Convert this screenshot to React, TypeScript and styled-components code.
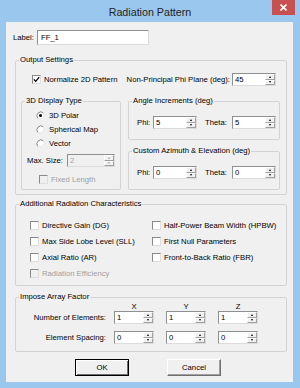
import React from "react";
import styled, { createGlobalStyle } from "styled-components";

const GlobalStyle = createGlobalStyle`
  html, body { margin: 0; padding: 0; }
  body {
    width: 300px;
    height: 388px;
    overflow: hidden;
    font-family: "Liberation Sans", Arial, sans-serif;
    font-size: 7.7px;
    color: #000;
  }
  * { box-sizing: border-box; }
`;

const Window = styled.div`
  width: 300px;
  height: 388px;
  background: #9ac7ee;
  display: flex;
  flex-direction: column;
`;

const TitleBar = styled.div`
  height: 22px;
  flex: none;
  display: grid;
  grid-template-columns: 1fr auto 1fr;
  align-items: start;
`;

const Title = styled.div`
  grid-column: 2;
  padding-top: 6px;
  font-size: 10.7px;
  line-height: 12px;
  color: #1e1e1e;
  white-space: nowrap;
`;

const CloseButton = styled.div`
  grid-column: 3;
  justify-self: end;
  margin-right: 5px;
  width: 23px;
  height: 15px;
  background: #c75050;
  display: flex;
  align-items: center;
  justify-content: center;
`;

const Client = styled.div`
  flex: 1;
  margin: 0 7px 6px 6px;
  background: #f0f0f0;
  display: flex;
  flex-direction: column;
`;

const LabelRow = styled.div`
  display: flex;
  align-items: center;
  gap: 3px;
  height: 15px;
  margin: 8px 0 0 7px;
`;

const TextInput = styled.div`
  width: 112px;
  height: 15px;
  background: #fff;
  border: 1px solid;
  border-color: #8e8f8f #dcdcdc #dcdcdc #8e8f8f;
  padding-left: 3px;
  line-height: 13px;
`;

const Group = styled.fieldset<{ $margin: string }>`
  margin: ${(p) => p.$margin};
  border: 1px solid #d3d3d3;
  border-radius: 2px;
  padding: 0;
  min-width: 0;
`;

const Legend = styled.legend`
  margin-left: 3px;
  padding: 0 1px;
  line-height: 10px;
  font-size: 7.7px;
`;

const OutputTopRow = styled.div`
  display: flex;
  justify-content: space-between;
  align-items: center;
  height: 13px;
  margin-top: 8px;
  padding: 0 10px 0 16px;
`;

const Inline = styled.div<{ $gap: number }>`
  display: flex;
  align-items: center;
  gap: ${(p) => p.$gap}px;
`;

const SubGrid = styled.div`
  display: grid;
  grid-template-columns: 100px 152px;
  column-gap: 7px;
  align-items: start;
  margin: 10px 6px 4px 5px;
`;

const Column = styled.div`
  display: flex;
  flex-direction: column;
  gap: 6px;
`;

const DisplayBody = styled.div`
  display: flex;
  flex-direction: column;
  padding: 2px 0 3px 0;
`;

const OptionRow = styled.div<{ $indent: number; $h: number; $mt?: number }>`
  display: flex;
  align-items: center;
  gap: 4px;
  height: ${(p) => p.$h}px;
  margin-top: ${(p) => p.$mt ?? 0}px;
  padding-left: ${(p) => p.$indent}px;
`;

const PairRow = styled.div`
  display: flex;
  align-items: center;
  height: 13px;
  margin: 10px 0 10px 8px;
`;

const FieldLabel = styled.span<{ $w: number; $ml?: number }>`
  width: ${(p) => p.$w}px;
  margin-left: ${(p) => p.$ml ?? 0}px;
  flex: none;
  white-space: nowrap;
`;

const Text = styled.span<{ $disabled?: boolean }>`
  white-space: nowrap;
  color: ${(p) => (p.$disabled ? "#a0a0a0" : "#000")};
`;

const CheckGrid = styled.div`
  display: grid;
  grid-template-columns: 122px 1fr;
  grid-auto-rows: 16px;
  padding: 8px 0 4px 14px;
`;

const CheckItem = styled.div`
  display: flex;
  align-items: center;
  gap: 3px;
`;

const BoxMark = styled.span<{ $disabled?: boolean }>`
  width: 9px;
  height: 9px;
  flex: none;
  background: ${(p) => (p.$disabled ? "#f0f0f0" : "#fff")};
  border: 1px solid;
  border-color: #8a8a8a #dedede #dedede #8a8a8a;
  display: flex;
  align-items: center;
  justify-content: center;
`;

const ArrayBody = styled.div`
  display: flex;
  flex-direction: column;
  padding-bottom: 7px;
`;

const ArrayRow = styled.div<{ $h: number; $mt?: number }>`
  display: grid;
  grid-template-columns: 90px 44px 44px 40px;
  column-gap: 8px;
  align-items: center;
  height: ${(p) => p.$h}px;
  margin-top: ${(p) => p.$mt ?? 0}px;
`;

const AxisHead = styled.span<{ $col: number }>`
  grid-column: ${(p) => p.$col};
  width: 40px;
  text-align: center;
  line-height: 9px;
`;

const RowLabel = styled.span`
  justify-self: end;
  white-space: nowrap;
`;

const SpinBox = styled.div<{ $w: number; $disabled?: boolean }>`
  width: ${(p) => p.$w}px;
  height: 13px;
  flex: none;
  display: flex;
  background: ${(p) => (p.$disabled ? "#f0f0f0" : "#fff")};
  border: 1px solid;
  border-color: #8e8f8f #dcdcdc #dcdcdc #8e8f8f;
`;

const SpinValue = styled.span<{ $disabled?: boolean }>`
  flex: 1;
  padding-left: 2px;
  line-height: 11px;
  color: ${(p) => (p.$disabled ? "#a0a0a0" : "#000")};
`;

const SpinButtons = styled.div`
  width: 10px;
  display: flex;
  flex-direction: column;
`;

const SpinButton = styled.div`
  flex: 1;
  background: #f0f0f0;
  border: 1px solid;
  border-color: #fff #a0a0a0 #a0a0a0 #fff;
  display: flex;
  align-items: center;
  justify-content: center;
`;

const Arrow = styled.span<{ $up?: boolean; $disabled?: boolean }>`
  width: 0;
  height: 0;
  border-left: 1.5px solid transparent;
  border-right: 1.5px solid transparent;
  ${(p) =>
    p.$up
      ? `border-bottom: 2px solid ${p.$disabled ? "#a0a0a0" : "#000"};`
      : `border-top: 2px solid ${p.$disabled ? "#a0a0a0" : "#000"};`}
`;

const ButtonRow = styled.div`
  display: flex;
  justify-content: center;
  gap: 38px;
  margin-top: 7px;
  padding-right: 3px;
`;

const PushButton = styled.div<{ $default?: boolean }>`
  width: 54px;
  height: 17px;
  display: flex;
  align-items: center;
  justify-content: center;
  background: #f0f0f0;
  border: 1px solid;
  border-color: ${(p) => (p.$default ? "#000" : "#fff #6f6f6f #6f6f6f #fff")};
  box-shadow: ${(p) =>
    p.$default ? "inset 1px 1px 0 #fff, inset -1px -1px 0 #6f6f6f" : "inset -1px -1px 0 #a0a0a0"};
`;

function Spinner({ value, w, disabled }: { value: string; w: number; disabled?: boolean }) {
  return (
    <SpinBox $w={w} $disabled={disabled}>
      <SpinValue $disabled={disabled}>{value}</SpinValue>
      <SpinButtons>
        <SpinButton>
          <Arrow $up $disabled={disabled} />
        </SpinButton>
        <SpinButton>
          <Arrow $disabled={disabled} />
        </SpinButton>
      </SpinButtons>
    </SpinBox>
  );
}

function Check({ checked, disabled }: { checked?: boolean; disabled?: boolean }) {
  return (
    <BoxMark $disabled={disabled}>
      {checked && (
        <svg width="7" height="7" viewBox="0 0 7 7">
          <path d="M0.8 3.4 L2.7 5.3 L6.2 1.2" fill="none" stroke="#000" strokeWidth="1.3" />
        </svg>
      )}
    </BoxMark>
  );
}

function Radio({ selected }: { selected?: boolean }) {
  return (
    <svg width="9" height="9" viewBox="0 0 9 9" style={{ flex: "none" }}>
      <circle cx="4.5" cy="4.5" r="4" fill="#fff" />
      <path d="M1.7 7.3 A4 4 0 0 1 7.3 1.7" fill="none" stroke="#808080" strokeWidth="1" />
      <path d="M7.3 1.7 A4 4 0 0 1 1.7 7.3" fill="none" stroke="#e0e0e0" strokeWidth="1" />
      {selected && <circle cx="4.5" cy="4.5" r="1.5" fill="#000" />}
    </svg>
  );
}

function CheckLine({ label, checked, disabled }: { label: string; checked?: boolean; disabled?: boolean }) {
  return (
    <CheckItem>
      <Check checked={checked} disabled={disabled} />
      <Text $disabled={disabled}>{label}</Text>
    </CheckItem>
  );
}

export default function App() {
  return (
    <>
      <GlobalStyle />
      <Window>
        <TitleBar>
          <Title>Radiation Pattern</Title>
          <CloseButton>
            <svg width="7" height="7" viewBox="0 0 7 7">
              <path d="M0.5 0.5 L6.5 6.5 M6.5 0.5 L0.5 6.5" stroke="#fff" strokeWidth="1.6" />
            </svg>
          </CloseButton>
        </TitleBar>
        <Client>
          <LabelRow>
            <Text>Label:</Text>
            <TextInput>FF_1</TextInput>
          </LabelRow>

          <Group $margin="10px 6px 0 9px">
            <Legend>Output Settings</Legend>
            <OutputTopRow>
              <CheckLine label="Normalize 2D Pattern" checked />
              <Inline $gap={2}>
                <Text>Non-Principal Phi Plane (deg):</Text>
                <Spinner value="45" w={44} />
              </Inline>
            </OutputTopRow>
            <SubGrid>
              <Group $margin="0">
                <Legend>3D Display Type</Legend>
                <DisplayBody>
                  <OptionRow $indent={14} $h={14}>
                    <Radio selected />
                    <Text>3D Polar</Text>
                  </OptionRow>
                  <OptionRow $indent={14} $h={14}>
                    <Radio />
                    <Text>Spherical Map</Text>
                  </OptionRow>
                  <OptionRow $indent={14} $h={14}>
                    <Radio />
                    <Text>Vector</Text>
                  </OptionRow>
                  <OptionRow $indent={5} $h={13} $mt={4}>
                    <Text>Max. Size:</Text>
                    <Spinner value="2" w={48} disabled />
                  </OptionRow>
                  <OptionRow $indent={17} $h={14} $mt={5}>
                    <CheckLine label="Fixed Length" disabled />
                  </OptionRow>
                </DisplayBody>
              </Group>
              <Column>
                <Group $margin="0">
                  <Legend>Angle Increments (deg)</Legend>
                  <PairRow>
                    <FieldLabel $w={16}>Phi:</FieldLabel>
                    <Spinner value="5" w={44} />
                    <FieldLabel $w={27} $ml={8}>Theta:</FieldLabel>
                    <Spinner value="5" w={44} />
                  </PairRow>
                </Group>
                <Group $margin="0">
                  <Legend>Custom Azimuth &amp; Elevation (deg)</Legend>
                  <PairRow>
                    <FieldLabel $w={16}>Phi:</FieldLabel>
                    <Spinner value="0" w={44} />
                    <FieldLabel $w={27} $ml={8}>Theta:</FieldLabel>
                    <Spinner value="0" w={44} />
                  </PairRow>
                </Group>
              </Column>
            </SubGrid>
          </Group>

          <Group $margin="4px 6px 0 9px">
            <Legend>Additional Radiation Characteristics</Legend>
            <CheckGrid>
              <CheckLine label="Directive Gain (DG)" />
              <CheckLine label="Half-Power Beam Width (HPBW)" />
              <CheckLine label="Max Side Lobe Level (SLL)" />
              <CheckLine label="First Null Parameters" />
              <CheckLine label="Axial Ratio (AR)" />
              <CheckLine label="Front-to-Back Ratio (FBR)" />
              <CheckLine label="Radiation Efficiency" disabled />
            </CheckGrid>
          </Group>

          <Group $margin="6px 6px 0 9px">
            <Legend>Impose Array Factor</Legend>
            <ArrayBody>
              <ArrayRow $h={9}>
                <AxisHead $col={2}>X</AxisHead>
                <AxisHead $col={3}>Y</AxisHead>
                <AxisHead $col={4}>Z</AxisHead>
              </ArrayRow>
              <ArrayRow $h={13}>
                <RowLabel>Number of Elements:</RowLabel>
                <Spinner value="1" w={40} />
                <Spinner value="1" w={40} />
                <Spinner value="1" w={40} />
              </ArrayRow>
              <ArrayRow $h={13} $mt={7}>
                <RowLabel>Element Spacing:</RowLabel>
                <Spinner value="0" w={40} />
                <Spinner value="0" w={40} />
                <Spinner value="0" w={40} />
              </ArrayRow>
            </ArrayBody>
          </Group>

          <ButtonRow>
            <PushButton $default>OK</PushButton>
            <PushButton>Cancel</PushButton>
          </ButtonRow>
        </Client>
      </Window>
    </>
  );
}
